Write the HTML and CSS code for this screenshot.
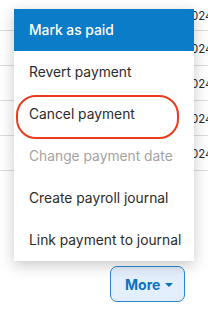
FILE: index.html
```html
<!DOCTYPE html>
<html lang="en">
<head>
    <meta charset="UTF-8">
    <meta name="viewport" content="width=device-width, initial-scale=1.0">
    <title>Payments</title>
    <link rel="stylesheet" href="styles.css">
</head>
<body>
    <div class="page">
        <div class="rows">
            <div class="row"><span class="date">2024</span></div>
            <div class="row"><span class="date">2024</span></div>
            <div class="row"><span class="date">2024</span></div>
            <div class="row"><span class="date">2024</span></div>
            <div class="row"><span class="date">2024</span></div>
        </div>
        <div class="footer">
            <button class="more">More <span class="caret"></span></button>
        </div>

        <!-- dropdown opened from the More button -->
        <ul class="menu">
            <li class="item active">Mark as paid</li>
            <li class="item">Revert payment</li>
            <li class="item">Cancel payment<span class="mark"></span></li>
            <li class="item disabled">Change payment date</li>
            <li class="item">Create payroll journal</li>
            <li class="item">Link payment to journal</li>
        </ul>
    </div>
</body>
</html>
```

FILE: styles.css
```css
*{
   margin: 0;
   padding: 0;
   box-sizing: border-box;
}
body{
   background-color: #fff;
   font-family: Inter, Roboto, "Noto Sans", Arial, sans-serif;
   color: #2b2b2b;
}
.page{
   position: relative;
   width: 208px;
   height: 311px;
   overflow: hidden;
}
.rows{
   display: flex;
   flex-direction: column;
}
.row{
   height: 35px;
   display: flex;
   align-items: center;
   border-bottom: 1px solid #dcdcdc;
   font-size: 11.5px;
   padding-top: 1px;
}
.row:first-child{
   height: 31px;
}
.date{
   margin-left: 184px;
   white-space: nowrap;
}
.footer{
   display: flex;
   justify-content: flex-end;
   padding-top: 95px;
   padding-right: 23px;
}
.more{
   display: flex;
   align-items: center;
   gap: 5px;
   width: 75px;
   height: 36px;
   padding-left: 14px;
   border: 1px solid #2a86d3;
   border-radius: 7px;
   background-color: #e4effd;
   color: #0b72c4;
   font-family: inherit;
   font-size: 14px;
   font-weight: 700;
}
.caret{
   width: 0;
   height: 0;
   border-left: 4px solid transparent;
   border-right: 4px solid transparent;
   border-top: 4px solid #0b72c4;
   margin-top: 1px;
}
.menu{
   position: absolute;
   top: 9px;
   left: 14px;
   width: 180px;
   list-style: none;
   background-color: #fff;
   box-shadow: 0 4px 14px rgba(0, 0, 0, 0.22);
}
.item{
   position: relative;
   height: 42px;
   display: flex;
   align-items: center;
   padding-left: 15px;
   font-size: 13.8px;
   white-space: nowrap;
}
.item.active{
   background-color: #0a7cc8;
   color: #fff;
   font-weight: 500;
}
.item.disabled{
   color: #a3a3a3;
}
.mark{
   position: absolute;
   top: 2px;
   left: 2px;
   width: 163px;
   height: 44px;
   border: 2px solid #ee3a1f;
   border-radius: 20px;
}
```
